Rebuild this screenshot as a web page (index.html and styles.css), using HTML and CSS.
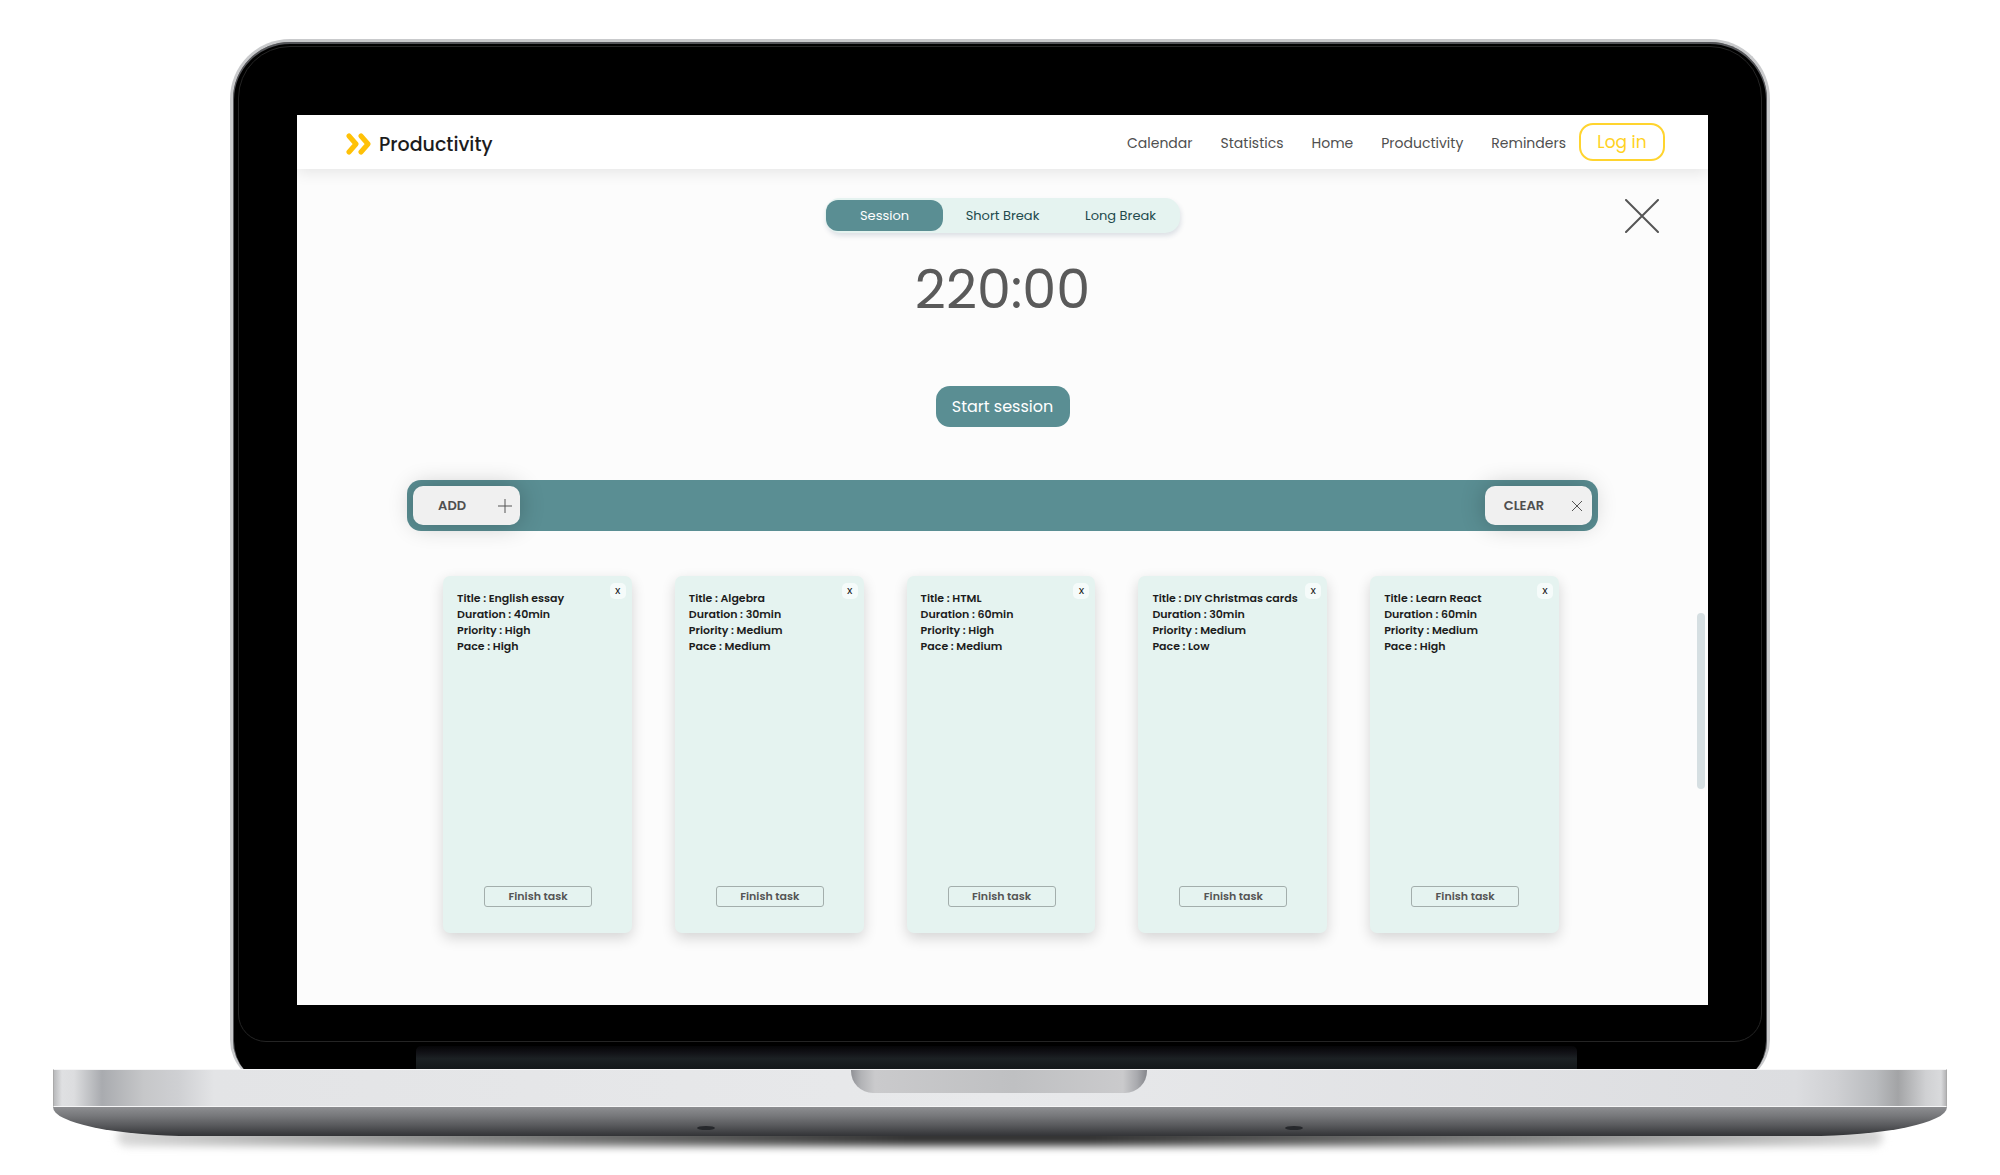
FILE: index.html
```html
<!DOCTYPE html>
<html lang="en">
<head>
<meta charset="utf-8">
<meta name="viewport" content="width=device-width, initial-scale=1">
<title>Productivity</title>
<link rel="stylesheet" href="styles.css">
</head>
<body>
<div class="laptop">
  <div class="lid">
    <div class="bezel">
      <div class="app">
        <header class="header">
          <a class="brand" href="#">
            <svg class="brand-icon" viewBox="0 0 24 22" aria-hidden="true"><path d="M3 3l7 8-7 8M15 3l7 8-7 8" transform="translate(-.5 0)"/></svg>
            <span>Productivity</span>
          </a>
          <nav class="nav">
            <a href="#">Calendar</a>
            <a href="#">Statistics</a>
            <a href="#">Home</a>
            <a href="#">Productivity</a>
            <a href="#">Reminders</a>
          </nav>
          <button class="login" type="button">Log in</button>
        </header>
        <main class="main">
          <div class="top-row">
            <div class="tabs">
              <button class="tab tab-active" type="button">Session</button>
              <button class="tab" type="button">Short Break</button>
              <button class="tab" type="button">Long Break</button>
            </div>
            <button class="close" type="button" aria-label="Close">
              <svg viewBox="0 0 34 34" aria-hidden="true"><path d="M1 1l32 32M33 1L1 33"/></svg>
            </button>
          </div>
          <div class="timer">220:00</div>
          <button class="start" type="button">Start session</button>
          <section class="board">
            <div class="toolbar">
              <button class="tool" type="button"><span>ADD</span><svg viewBox="0 0 16 16" aria-hidden="true"><path d="M8 1v14M1 8h14"/></svg></button>
              <button class="tool" type="button"><span>CLEAR</span><svg viewBox="0 0 16 16" aria-hidden="true"><path d="M3 3l10 10M13 3L3 13"/></svg></button>
            </div>
            <div class="cards">
              <article class="card">
                <p>Title : English essay</p><p>Duration : 40min</p><p>Priority : High</p><p>Pace : High</p>
                <button class="remove" type="button">X</button>
                <button class="finish" type="button">Finish task</button>
              </article>
              <article class="card">
                <p>Title : Algebra</p><p>Duration : 30min</p><p>Priority : Medium</p><p>Pace : Medium</p>
                <button class="remove" type="button">X</button>
                <button class="finish" type="button">Finish task</button>
              </article>
              <article class="card">
                <p>Title : HTML</p><p>Duration : 60min</p><p>Priority : High</p><p>Pace : Medium</p>
                <button class="remove" type="button">X</button>
                <button class="finish" type="button">Finish task</button>
              </article>
              <article class="card">
                <p>Title : DIY Christmas cards</p><p>Duration : 30min</p><p>Priority : Medium</p><p>Pace : Low</p>
                <button class="remove" type="button">X</button>
                <button class="finish" type="button">Finish task</button>
              </article>
              <article class="card">
                <p>Title : Learn React</p><p>Duration : 60min</p><p>Priority : Medium</p><p>Pace : High</p>
                <button class="remove" type="button">X</button>
                <button class="finish" type="button">Finish task</button>
              </article>
            </div>
          </section>
        </main>
        <div class="scroll-thumb"></div>
      </div>
    </div>
    <div class="hinge"></div>
  </div>
  <div class="base">
    <div class="deck"><div class="notch"></div></div>
    <div class="ground-shadow"></div>
    <div class="underside"><span class="foot"></span><span class="foot"></span></div>
  </div>
</div>
</body>
</html>
```
FILE: styles.css
```css
* {
  box-sizing: border-box;
}

body {
  margin: 0;
  background: #fff;
  font-family: Poppins, Inter, sans-serif;
  color: #1c1c1c;
}

button {
  font-family: inherit;
  border: 0;
  padding: 0;
  cursor: pointer;
}

a {
  color: inherit;
  text-decoration: none;
}

.laptop {
  display: flex;
  flex-direction: column;
  align-items: center;
  padding: 39px 0 38px;
}

/* Lid and screen; the lower edge tucks in behind the base */
.lid {
  width: 77%;
  margin-bottom: -15px;
  padding-bottom: 15px;
  border: solid #c9cacc;
  border-width: 3px 3px 0;
  border-radius: 60px 60px 44px 44px;
  background: #000;
  box-shadow: inset 0 1px 0 1px #55565a;
}

.bezel {
  margin: 4px 5px 0;
  padding: 68px 53px 36px 58px;
  border: 1px solid #242424;
  border-radius: 52px 52px 28px 28px;
}

.hinge {
  width: 75.7%;
  height: 23px;
  margin: 4px 0 0 11.9%;
  border-radius: 5px 5px 0 0;
  background: linear-gradient(#050507, #121217 30%, #1c2124 55%, #14181a);
}

.app {
  position: relative;
  background: #fcfcfc;
}

.header {
  display: flex;
  align-items: center;
  height: 54px;
  padding: 0 43px 0 49px;
  background: #fff;
  box-shadow: 0 4px 14px rgba(0, 0, 0, 0.09);
}

.brand {
  display: flex;
  align-items: center;
  gap: 8px;
  margin-right: auto;
  padding-top: 4px;
  font-size: 19px;
  font-weight: 500;
}

.brand-icon {
  width: 25px;
  height: 22px;
  fill: none;
  stroke: #ffc107;
  stroke-width: 5;
  stroke-linecap: round;
  stroke-linejoin: round;
}

.nav {
  display: flex;
  gap: 28px;
  margin-right: 13px;
  padding-top: 3px;
  font-size: 14px;
  color: #4f4f4f;
}

.login {
  width: 86px;
  height: 38px;
  border: 2px solid #ffd42e;
  border-radius: 14px;
  background: #fff;
  color: #ffd21f;
  font-size: 17px;
}

.main {
  display: flex;
  flex-direction: column;
  align-items: center;
  padding: 29px 0 72px;
}

.top-row {
  display: grid;
  grid-template-columns: 1fr auto 1fr;
  align-items: center;
  width: 100%;
  padding: 0 49px;
}

.tabs {
  grid-column: 2;
  display: grid;
  grid-template-columns: repeat(3, 117px);
  gap: 1px;
  padding: 2px 1px;
  border-radius: 15px;
  background: #e5f3f0;
  box-shadow: 1px 3px 5px rgba(30, 60, 90, 0.14);
}

.tab {
  height: 31px;
  border-radius: 12px;
  background: transparent;
  color: #234a4d;
  font-size: 13px;
}

.tab-active {
  background: #5a8e93;
  color: #fff;
}

.close {
  justify-self: end;
  width: 34px;
  height: 34px;
  background: none;
}

.close svg {
  display: block;
  fill: none;
  stroke: #555;
  stroke-width: 2;
  stroke-linecap: round;
}

.timer {
  margin-top: 26px;
  color: #5a5a5a;
  font-size: 54px;
  line-height: 60px;
}

.start {
  width: 134px;
  height: 41px;
  margin-top: 67px;
  border-radius: 14px;
  background: #5a8e93;
  color: #fff;
  font-size: 16px;
}

/* Task board */
.board {
  width: 84.4%;
  margin-top: 53px;
}

.toolbar {
  display: flex;
  justify-content: space-between;
  padding: 6px;
  border-radius: 14px;
  background: #5a8e93;
}

.tool {
  display: flex;
  align-items: center;
  gap: 6px;
  width: 107px;
  height: 39px;
  padding-right: 7px;
  border-radius: 10px;
  background: #f0f0f0;
  box-shadow: 0 0 24px rgba(0, 0, 0, 0.24);
  color: #4f4f4f;
  font-size: 13px;
  font-weight: 600;
}

.tool span {
  flex: 1;
}

.tool svg {
  width: 16px;
  height: 16px;
  fill: none;
  stroke: #555;
}

.cards {
  display: grid;
  grid-template-columns: repeat(5, 1fr);
  gap: 43px;
  margin-top: 45px;
  padding: 0 39px 0 36px;
}

.card {
  position: relative;
  display: flex;
  flex-direction: column;
  min-height: 357px;
  padding: 14px 0 26px 14px;
  border-radius: 7px;
  background: #e5f3f0;
  box-shadow: 0 5px 14px rgba(0, 0, 0, 0.16);
  font-size: 11px;
  font-weight: 600;
  line-height: 16px;
  white-space: nowrap;
}

.card p {
  margin: 0;
}

.remove {
  position: absolute;
  top: 7px;
  right: 6px;
  width: 16px;
  height: 16px;
  border-radius: 5px;
  background: #f5fbfa;
  color: #222;
  font-size: 9px;
  font-weight: 500;
}

.finish {
  width: 108px;
  height: 21px;
  margin: auto auto 0 27px;
  border: 1px solid #a3aeac;
  border-radius: 3px;
  background: transparent;
  color: #555;
  font-size: 11px;
  font-weight: 600;
}

.scroll-thumb {
  position: absolute;
  top: 56%;
  right: 3px;
  width: 8px;
  height: 176px;
  border-radius: 4px;
  background: #d6dfe2;
}

/* Laptop base */
.base {
  position: relative;
  width: 94.7%;
}

.deck {
  display: flex;
  justify-content: center;
  height: 38px;
  padding-right: 3px;
  border: 1px solid #f6f6f7;
  border-color: #f6f6f7 #aaa;
  background: linear-gradient(90deg, #b9babc 0, #dfe0e2 8px, #dcdddf 20px, #a9abaf 48px, #c6c7c9 90px, #cfd0d3 125px, #e3e4e6 160px, #e8e9eb 50%, #dcdde0 calc(100% - 150px), #cfd0d3 calc(100% - 110px), #b9bbbe calc(100% - 70px), #a3a4a6 calc(100% - 48px), #d0d1d3 calc(100% - 20px), #d9dadc calc(100% - 5px), #b5b5b7);
}

.notch {
  width: 296px;
  height: 23px;
  border-radius: 0 0 22px 22px;
  background: linear-gradient(90deg, #909196, #b2b3b6 10px, #cacacc 24px, #bfc0c2 55%, #cacacc calc(100% - 24px), #a9aaae calc(100% - 10px), #85868b);
}

.underside {
  position: relative;
  display: flex;
  justify-content: space-between;
  height: 29px;
  padding: 19px 34% 0;
  border-radius: 0 0 140px 140px / 0 0 29px 29px;
  background: linear-gradient(#8d8e91, #77787b 30%, #57585b 65%, #323336);
}

.foot {
  width: 18px;
  height: 4px;
  border-radius: 50%;
  background: #26282c;
}

.ground-shadow {
  position: absolute;
  right: 64px;
  bottom: -10px;
  left: 64px;
  height: 18px;
  border-radius: 9px;
  background: linear-gradient(90deg, #d8d8d8, #828382 20%, #303030 45%, #303030 55%, #828382 80%, #d8d8d8);
  filter: blur(4px);
}
```
